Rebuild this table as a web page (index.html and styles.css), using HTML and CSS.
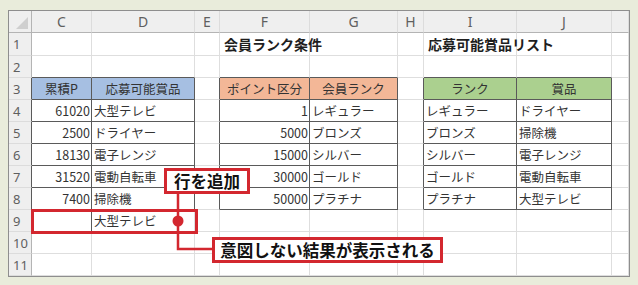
FILE: index.html
```html
<!DOCTYPE html>
<html lang="ja">
<head>
<meta charset="utf-8">
<link rel="stylesheet" href="styles.css">
</head>
<body>
<div class="frame">
  <div class="sheet">
    <div class="ch corner"><span class="tri"></span></div>
    <div class="ch">C</div><div class="ch">D</div><div class="ch">E</div><div class="ch">F</div><div class="ch">G</div><div class="ch">H</div><div class="ch">I</div><div class="ch">J</div><div class="ch"></div>

    <div class="rh">1</div><div class="c"></div><div class="c"></div><div class="c"></div><div class="c title">会員ランク条件</div><div class="c"></div><div class="c"></div><div class="c title">応募可能賞品リスト</div><div class="c"></div><div class="c"></div>

    <div class="rh">2</div><div class="c db"></div><div class="c db"></div><div class="c"></div><div class="c db"></div><div class="c db"></div><div class="c"></div><div class="c db"></div><div class="c db"></div><div class="c"></div>

    <div class="rh dr">3</div><div class="c t hb ctr">累積P</div><div class="c t hb ctr">応募可能賞品</div><div class="c dr"></div><div class="c t hs ctr">ポイント区分</div><div class="c t hs ctr">会員ランク</div><div class="c dr"></div><div class="c t hg ctr">ランク</div><div class="c t hg ctr">賞品</div><div class="c"></div>

    <div class="rh dr">4</div><div class="c t r">61020</div><div class="c t">大型テレビ</div><div class="c dr"></div><div class="c t r">1</div><div class="c t">レギュラー</div><div class="c dr"></div><div class="c t">レギュラー</div><div class="c t">ドライヤー</div><div class="c"></div>

    <div class="rh dr">5</div><div class="c t r">2500</div><div class="c t">ドライヤー</div><div class="c dr"></div><div class="c t r">5000</div><div class="c t">ブロンズ</div><div class="c dr"></div><div class="c t">ブロンズ</div><div class="c t">掃除機</div><div class="c"></div>

    <div class="rh dr">6</div><div class="c t r">18130</div><div class="c t">電子レンジ</div><div class="c dr"></div><div class="c t r">15000</div><div class="c t">シルバー</div><div class="c dr"></div><div class="c t">シルバー</div><div class="c t">電子レンジ</div><div class="c"></div>

    <div class="rh dr">7</div><div class="c t r">31520</div><div class="c t">電動自転車</div><div class="c dr"></div><div class="c t r">30000</div><div class="c t">ゴールド</div><div class="c dr"></div><div class="c t">ゴールド</div><div class="c t">電動自転車</div><div class="c"></div>

    <div class="rh dr">8</div><div class="c t r">7400</div><div class="c t">掃除機</div><div class="c dr"></div><div class="c t r">50000</div><div class="c t">プラチナ</div><div class="c dr"></div><div class="c t">プラチナ</div><div class="c t">大型テレビ</div><div class="c"></div>

    <div class="rh">9</div><div class="c dr"></div><div class="c">大型テレビ</div><div class="c"></div><div class="c"></div><div class="c"></div><div class="c"></div><div class="c"></div><div class="c"></div><div class="c"></div>

    <div class="rh">10</div><div class="c"></div><div class="c"></div><div class="c"></div><div class="c"></div><div class="c"></div><div class="c"></div><div class="c"></div><div class="c"></div><div class="c"></div>

    <div class="rh">11</div><div class="c"></div><div class="c"></div><div class="c"></div><div class="c"></div><div class="c"></div><div class="c"></div><div class="c"></div><div class="c"></div><div class="c"></div>
  </div>

  <div class="rowbox"></div>
  <svg class="wires" width="638" height="285" viewBox="0 0 638 285">
    <path d="M178 193 V249 H212" fill="none" stroke="#d3272f" stroke-width="2.5"/>
    <circle cx="178" cy="221" r="5.5" fill="#d3272f"/>
  </svg>
  <div class="callout c1">行を追加</div>
  <div class="callout c2">意図しない結果が表示される</div>
</div>
</body>
</html>
```
FILE: styles.css
```css
* { box-sizing: border-box; }
html, body { margin: 0; padding: 0; }
body {
  background: #e9ecdb;
  font-family: "Noto Sans CJK JP", "Noto Sans", sans-serif;
}
.frame {
  position: relative;
  width: 638px;
  height: 285px;
  padding: 10px 0 0 8px;
}
.sheet {
  display: grid;
  grid-template-columns: 23px 60px 103px 25px 90px 88px 26px 93px 95px 17px;
  grid-template-rows: 22px 23px repeat(10, 22px);
  width: 622px;
  border: 1px solid #8e8e8e;
  background: #fff;
}
.ch {
  background: #efefef;
  border-right: 1px solid #dcdcdc;
  border-bottom: 1px solid #b4b4b4;
  color: #5f5f5f;
  font-family: "Noto Sans", sans-serif;
  font-size: 14px;
  display: flex;
  align-items: center;
  justify-content: center;
}
.corner { position: relative; border-right-color: #b4b4b4; }
.tri {
  position: absolute;
  right: 3px;
  bottom: 3px;
  width: 0;
  height: 0;
  border-left: 12px solid transparent;
  border-bottom: 12px solid #cfcfcf;
}
.rh {
  background: #efefef;
  border-right: 1px solid #b4b4b4;
  border-bottom: 1px solid #dcdcdc;
  color: #5f5f5f;
  font-family: "Noto Sans", sans-serif;
  font-size: 13px;
  display: flex;
  align-items: center;
  padding-left: 4px;
}
.c {
  border-right: 1px solid #dedede;
  border-bottom: 1px solid #dedede;
  color: #333;
  font-size: 12.5px;
  display: flex;
  align-items: center;
  padding: 0 2px 0 2px;
  white-space: nowrap;
  min-width: 0;
}
.title {
  font-weight: bold;
  font-size: 14px;
  color: #1e1e1e;
  padding-left: 4px;
  overflow: visible;
}
.t { border-right-color: #5a5a5a; border-bottom-color: #5a5a5a; }
.dr { border-right-color: #5a5a5a; }
.db { border-bottom-color: #5a5a5a; }
.r { justify-content: flex-end; padding-right: 1px; }
.ctr { justify-content: center; }
.hb { background: #a6bfe2; }
.hs { background: #f3b797; }
.hg { background: #abd08f; }
.rowbox {
  position: absolute;
  left: 31px;
  top: 209px;
  width: 167px;
  height: 25px;
  border: 3px solid #d3272f;
}
.wires { position: absolute; left: 0; top: 0; }
.callout {
  position: absolute;
  background: #fff;
  border: 3px solid #d3272f;
  font-weight: bold;
  color: #111;
  display: flex;
  align-items: center;
  justify-content: center;
  white-space: nowrap;
}
.c1 { left: 164px; top: 168px; width: 86px; height: 26px; font-size: 16.5px; }
.c2 { left: 212px; top: 237px; width: 231px; height: 26px; font-size: 16.5px; }
```
